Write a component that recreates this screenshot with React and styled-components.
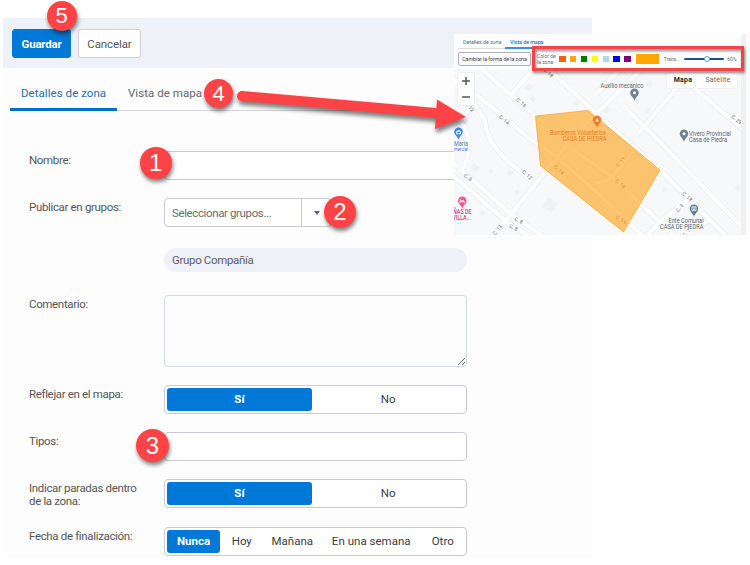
import React from "react";
import styled, { createGlobalStyle } from "styled-components";

const Global = createGlobalStyle`
  * { box-sizing: border-box; }
  body { margin: 0; background: #fff; font-family: Roboto, "Liberation Sans", sans-serif; }
  button, textarea, input { font-family: inherit; }
`;

const Page = styled.main`
  position: relative;
  width: 750px;
  height: 565px;
  padding: 18px 0 0 3px;
  overflow: hidden;
`;

const Panel = styled.section`
  width: 589px;
  height: 541px;
  background: #fdfdfd;
`;

const Toolbar = styled.header`
  display: flex;
  gap: 7px;
  height: 50px;
  padding: 11px 9px;
  background: #eef1f7;
`;

const Button = styled.button`
  width: ${(p) => (p.$primary ? 59 : 63)}px;
  height: 29px;
  padding: 0;
  border: 1px solid ${(p) => (p.$primary ? "#0078d7" : "#cdced9")};
  border-radius: 3px;
  background: ${(p) => (p.$primary ? "#0078d7" : "#fff")};
  color: ${(p) => (p.$primary ? "#fff" : "#555")};
  font-size: 11.5px;
  font-weight: ${(p) => (p.$primary ? 700 : 400)};
  letter-spacing: ${(p) => (p.$primary ? -0.22 : -0.1)}px;
`;

const Tabs = styled.nav`
  display: flex;
  height: 43px;
  margin-left: 7px;
  border-bottom: 1px solid #d3d4dc;
`;

const Tab = styled.div`
  height: 43px;
  padding: 18px 11px 0;
  width: ${(p) => (p.$active ? 107 : 100)}px;
  border-bottom: 3px solid ${(p) => (p.$active ? "#0070c8" : "transparent")};
  color: ${(p) => (p.$active ? "#1a6fb5" : "#666")};
  font-size: 11.5px;
  line-height: 15px;
  letter-spacing: 0.05px;
  white-space: nowrap;
`;

const Form = styled.div`
  display: flex;
  flex-direction: column;
  gap: 18px;
  padding: 40px 0 0 26px;
`;

const Row = styled.div`
  display: grid;
  grid-template-columns: 135px 303px;
  margin-top: ${(p) => p.$shift || 0}px;
`;

const Label = styled.label`
  padding-top: 3px;
  width: 118px;
  color: #555;
  font-size: 11.5px;
  line-height: 13px;
  letter-spacing: -0.34px;
`;

const Field = styled.div`
  height: 29px;
  border: 1px solid #c8cad8;
  border-radius: 4px;
  background: #fff;
`;

const Combo = styled(Field)`
  display: grid;
  grid-template-columns: 137px 29px;
  width: 168px;
  color: #6c6c6c;
  font-size: 11.5px;
  line-height: 28px;
  letter-spacing: -0.38px;
`;

const ComboText = styled.span`
  padding-left: 7px;
  border-right: 1px solid #c8cad8;
`;

const ComboArrow = styled.span`
  display: grid;
  place-items: center;
`;

const Chip = styled.div`
  grid-column: 2;
  height: 24px;
  padding-left: 8px;
  border-radius: 12px;
  background: #eef1f7;
  color: #606060;
  font-size: 11.5px;
  line-height: 24px;
  letter-spacing: -0.35px;
`;

const Comment = styled.textarea`
  display: block;
  width: 303px;
  height: 72px;
  border: 1px solid #c9def0;
  border-radius: 4px;
  background: #fdfdfd;
  outline: none;
`;

const Segments = styled(Field)`
  display: grid;
  grid-template-columns: ${(p) => p.$cols};
  padding: 2px;
`;

const Segment = styled.div`
  border-radius: 3px;
  background: ${(p) => (p.$on ? "#0078d7" : "transparent")};
  color: ${(p) => (p.$on ? "#fff" : "#3c3c3c")};
  font-size: 11.5px;
  font-weight: ${(p) => (p.$on ? 700 : 400)};
  line-height: 23px;
  letter-spacing: 0.02px;
  padding-left: ${(p) => (p.$on ? 0 : 0.5)}px;
  text-align: center;
  white-space: nowrap;
`;

const Badge = styled.div`
  position: absolute;
  left: ${(p) => p.$x}px;
  top: ${(p) => p.$y}px;
  width: ${(p) => p.$d}px;
  height: ${(p) => p.$d}px;
  border-radius: 50%;
  background: #fd4345;
  box-shadow: 1px 3px 4px rgba(0, 0, 0, 0.5);
  color: #fff;
  font-family: "Liberation Sans", sans-serif;
  font-size: ${(p) => (p.$d > 30 ? 24 : 22)}px;
  line-height: ${(p) => p.$d}px;
  text-align: center;
`;

const Arrow = styled.svg`
  position: absolute;
  left: 230px;
  top: 85px;
  filter: drop-shadow(1px 4px 2px rgba(0, 0, 0, 0.5));
`;

const Preview = styled.section`
  position: absolute;
  left: 454px;
  top: 34px;
  width: 292px;
  height: 201px;
  border-right: 5px solid #f0f0f0;
  background: #fff;
`;

const MiniTabs = styled.nav`
  display: flex;
  height: 15px;
  margin-left: 4px;
  border-bottom: 1px solid #dcdcdc;
`;

const MiniTab = styled.div`
  width: ${(p) => (p.$active ? 43 : 47)}px;
  height: 15px;
  padding: 4px 0 0 5px;
  border-bottom: 2px solid ${(p) => (p.$active ? "#3a90dc" : "transparent")};
  color: ${(p) => (p.$active ? "#1777c9" : "#666")};
  font-size: 5.4px;
  font-weight: ${(p) => (p.$active ? 500 : 400)};
  line-height: 8px;
  letter-spacing: -0.08px;
  white-space: nowrap;
`;

const MiniBar = styled.div`
  display: flex;
  align-items: center;
  height: 20px;
  padding-left: 4px;
  color: #666;
  font-size: 5px;
  white-space: nowrap;
`;

const ShapeButton = styled.div`
  width: 73px;
  height: 14px;
  margin-right: 6px;
  border: 1px solid #aab2c2;
  border-radius: 2px;
  background: #fafafc;
  color: #444;
  font-size: 5.3px;
  line-height: 13px;
  letter-spacing: -0.06px;
  text-align: center;
`;

const ColorLabel = styled.div`
  width: 22px;
  font-size: 5px;
  line-height: 6px;
`;

const Swatches = styled.div`
  display: flex;
  gap: 4.4px;
  margin-right: 5px;
`;

const Swatch = styled.span`
  width: 6.5px;
  height: 6.5px;
  background: ${(p) => p.$c};
`;

const Selected = styled.span`
  width: 23px;
  height: 10px;
  margin-right: 5px;
  background: #ffa500;
`;

const Track = styled.span`
  display: grid;
  place-content: center;
  width: 40px;
  height: 2px;
  margin: 0 3px 0 4px;
  padding-left: 6px;
  border-radius: 1px;
  background: #1d4f94;
`;

const Knob = styled.span`
  width: 6px;
  height: 6px;
  border: 1px solid #5aa0d8;
  border-radius: 50%;
  background: #fff;
`;

const MapArea = styled.div`
  position: relative;
  height: 166px;
`;

const Zoom = styled.div`
  position: absolute;
  left: 4px;
  top: 4px;
  display: grid;
  grid-template-rows: 16px 16px;
  place-items: center;
  width: 16px;
  background: #fff;
  box-shadow: 0 0 1px #bbb;
`;

const MapTypes = styled.div`
  position: absolute;
  left: 213px;
  top: 4px;
  display: grid;
  grid-template-columns: 32px 38px;
  height: 15px;
  background: #fff;
  box-shadow: 0 0 1px #ccc;
  font-size: 7px;
  line-height: 15px;
  text-align: center;
  letter-spacing: 0.2px;
`;

const MapType = styled.span`
  color: ${(p) => (p.$on ? "#111" : "#666")};
  font-weight: ${(p) => (p.$on ? 600 : 400)};
`;

const Highlight = styled.div`
  position: absolute;
  left: 532px;
  top: 46px;
  width: 212px;
  height: 25px;
  border: 3px solid #f54447;
  filter: drop-shadow(1px 2px 1.5px rgba(0, 0, 0, 0.5));
`;

const roads = [
  "M476 64L513 97L545 124",
  "M510 96L536 66",
  "M450 76L475 94L507 119Q530 141 550 152L600 195L645 238",
  "M450 81Q473 96 485 121C487 148 509 162 533 182",
  "M454 116C470 125 474 154 460 172",
  "M543 64L600 117L660 170L729 239",
  "M450 160L510 213L548 240",
  "M450 173L507 222L535 240",
  "M490 240L533 187L575 135L647 64",
  "M595 95L623 66",
  "M622 105L655 137L745 230",
  "M637 135L684 79",
  "M668 66L745 131",
  "M565 144L612 177L660 222L676 238",
  "M595 183Q607 182 612 177L633 150",
  "M643 240L660 222L687 200",
  "M676 240L710 220",
];

const streets = [
  [520, 104, 42, "C. 16"], [503, 121, 42, "C. 14"], [468, 108, 50, "C. 12"],
  [526, 176, 42, "C. 12"], [467, 179, 35, "C. 8"], [518, 222, 25, "C. 8"],
  [513, 229, 25, "C. 8"], [499, 231, -50, "C. 13"], [558, 171, 42, "C. 14"],
  [622, 163, -52, "C. 11"], [619, 185, 42, "C. 10"], [620, 221, 32, "C. 14"],
  [686, 198, 42, "C. 18"], [681, 209, -52, "C. 9"], [735.5, 121, 40, "C. 29"],
  [547, 74, 42, "C. 18"], [688, 234, -50, "C. 7"],
];

const blocks = [
  [475, 168, 7], [491, 171, 4], [510, 173, 5], [550, 205, 11], [482, 213, 5],
  [517, 192, 4], [529, 87, 6], [576, 103, 5], [607, 110, 6], [637, 100, 5],
  [647, 111, 5], [664, 190, 4], [738, 188, 5], [650, 84, 6], [533, 99, 5],
];

function Pin({ x, y, color, glyph = "dot" }) {
  return (
    <g transform={`translate(${x} ${y})`}>
      <path d="M0 7C-1 3 -4.3 2 -4.3-1.2A4.3 4.3 0 1 1 4.3-1.2C4.3 2 1 3 0 7Z" fill={color} />
      {glyph === "dot" && <circle cy="-1.2" r="1.5" fill="#fff" />}
      {glyph === "bed" && <path d="M-2.1-2.7V.7M-2.1-.3H2.1V.7M-.7-1.5H1.3" fill="none" stroke="#fff" strokeWidth=".9" />}
      {glyph === "bag" && <path d="M-2-1.6H2V.8H-2ZM-1-1.8Q0-4 1-1.8" fill="none" stroke="#fff" strokeWidth=".9" />}
      {glyph === "hall" && <path d="M-2-3.2H2V.7H-2ZM-1-2H1M-1-.6H1" fill="none" stroke="#fff" strokeWidth=".8" />}
      {glyph === "flame" && <path d="M0-3.6C.2-2 2-1.6 1.6.1C1.2 1.3-1.2 1.3-1.6.1C-1.8-1-.4-1.6 0-3.6Z" fill="#ffd39a" />}
    </g>
  );
}

function MapDrawing() {
  return (
    <svg width="287" height="166" viewBox="454 69 287 166" display="block" fontFamily="Roboto">
      <rect x="454" y="69" width="287" height="166" fill="#f7f8f9" />
      {blocks.map(([x, y, s]) => (
        <rect key={`${x}-${y}`} x={x - s / 2} y={y - s / 2} width={s} height={s} fill="#f0f1f3" transform={`rotate(32 ${x} ${y})`} />
      ))}
      <g fill="none" stroke="#e6e8eb" strokeWidth="5.4">{roads.map((d) => <path key={d} d={d} />)}</g>
      <g fill="none" stroke="#fff" strokeWidth="4.2">{roads.map((d) => <path key={d} d={d} />)}</g>
      <g fill="#5f6468" fontSize="5" textAnchor="middle">
        {streets.map(([x, y, r, t]) => (
          <text key={`${x}-${y}`} transform={`translate(${x} ${y}) rotate(${r})`}>{t}</text>
        ))}
      </g>
      <path d="M535.5 116L588 110.5L660 170L623.5 232L540.5 165.7Z" fill="#ffa51f" fillOpacity=".64" stroke="#f9a72c" strokeWidth=".8" />
      <Pin x={597} y={121} color="#f07d26" glyph="flame" />
      <Pin x={634.5} y={94} color="#708392" />
      <Pin x={684} y={135} color="#708392" />
      <Pin x={694} y={210} color="#5c7c91" glyph="hall" />
      <Pin x={458.5} y={133} color="#4285f4" glyph="bag" />
      <Pin x={462.3} y={202} color="#ee5b94" glyph="bed" />
      <g fontSize="6.4">
        <text x="550" y="134.5" fill="#e87a24" textLength="56" lengthAdjust="spacingAndGlyphs">Bomberos Voluntarios</text>
        <text x="562.5" y="140.7" fill="#e87a24" textLength="44" lengthAdjust="spacingAndGlyphs">CASA DE PIEDRA</text>
        <g fill="#526573">
          <text x="600.5" y="88" textLength="43" lengthAdjust="spacingAndGlyphs">Auxilio mecanico</text>
          <text x="689" y="135.7" textLength="42" lengthAdjust="spacingAndGlyphs">Vivero Provincial</text>
          <text x="689" y="141.7" textLength="38" lengthAdjust="spacingAndGlyphs">Casa de Piedra</text>
          <text x="668.5" y="222.7" textLength="35" lengthAdjust="spacingAndGlyphs">Ente Comunal</text>
          <text x="660" y="228.5" textLength="43.5" lengthAdjust="spacingAndGlyphs">CASA DE PIEDRA</text>
        </g>
        <text x="454" y="146.3" fill="#3d7fe0" textLength="14" lengthAdjust="spacingAndGlyphs">Maria</text>
        <text x="454" y="151" fill="#3d7fe0" fontSize="5" textLength="14" lengthAdjust="spacingAndGlyphs">mercial</text>
        <g fill="#d9367a" fontWeight="500">
          <text x="453" y="214" textLength="18.5" lengthAdjust="spacingAndGlyphs">ÑAS DE</text>
          <text x="452.5" y="220" textLength="18.5" lengthAdjust="spacingAndGlyphs">VILLA...</text>
        </g>
      </g>
    </svg>
  );
}

const swatches = ["#ff5f0a", "#ffa31a", "#008000", "#ffff00", "#add8e6", "#0000ff", "#800080"];
const badges = [[5, 46.5, 0.5, 30], [4, 204, 78.5, 29], [1, 140, 147, 31.5], [2, 324, 196, 32], [3, 136, 429, 33]];

function YesNo() {
  return (
    <Segments $cols="145px 1fr">
      <Segment $on>Sí</Segment>
      <Segment>No</Segment>
    </Segments>
  );
}

export default function App() {
  return (
    <Page>
      <Global />
      <Panel>
        <Toolbar>
          <Button $primary>Guardar</Button>
          <Button>Cancelar</Button>
        </Toolbar>
        <Tabs>
          <Tab $active>Detalles de zona</Tab>
          <Tab>Vista de mapa</Tab>
        </Tabs>
        <Form>
          <Row><Label>Nombre:</Label><Field /></Row>
          <Row>
            <Label>Publicar en grupos:</Label>
            <Combo>
              <ComboText>Seleccionar grupos...</ComboText>
              <ComboArrow><svg width="6" height="4"><path d="M0 0H6L3 4Z" fill="#52677d" /></svg></ComboArrow>
            </Combo>
          </Row>
          <Row $shift={3}><Chip>Grupo Compañía</Chip></Row>
          <Row $shift={5}><Label>Comentario:</Label><Comment /></Row>
          <Row><Label>Reflejar en el mapa:</Label><YesNo /></Row>
          <Row><Label>Tipos:</Label><Field /></Row>
          <Row><Label>Indicar paradas dentro de la zona:</Label><YesNo /></Row>
          <Row $shift={0.5}>
            <Label>Fecha de finalización:</Label>
            <Segments $cols="53px 43px 58px 100px 43px">
              <Segment $on>Nunca</Segment>
              <Segment>Hoy</Segment>
              <Segment>Mañana</Segment>
              <Segment>En una semana</Segment>
              <Segment>Otro</Segment>
            </Segments>
          </Row>
        </Form>
      </Panel>

      <Preview>
        <MiniTabs>
          <MiniTab>Detalles de zona</MiniTab>
          <MiniTab $active>Vista de mapa</MiniTab>
        </MiniTabs>
        <MiniBar>
          <ShapeButton>Cambiar la forma de la zona</ShapeButton>
          <ColorLabel>Color de<br />la zona:</ColorLabel>
          <Swatches>{swatches.map((c) => <Swatch key={c} $c={c} />)}</Swatches>
          <Selected />
          Trans...
          <Track><Knob /></Track>
          60%
        </MiniBar>
        <MapArea>
          <MapDrawing />
          <Zoom>
            <svg width="8" height="8"><path d="M0 4H8M4 0V8" stroke="#555" strokeWidth="1.5" /></svg>
            <svg width="8" height="8"><path d="M0 4H8" stroke="#555" strokeWidth="1.5" /></svg>
          </Zoom>
          <MapTypes><MapType $on>Mapa</MapType><MapType>Satélite</MapType></MapTypes>
        </MapArea>
      </Preview>

      <Highlight />
      <Arrow width="250" height="80">
        <path d="M12 11L206 28" stroke="#fd4345" strokeWidth="10" strokeLinecap="round" />
        <path d="M207 14.5L236 32L205 44Z" fill="#fd4345" />
      </Arrow>
      {badges.map(([n, x, y, d]) => <Badge key={n} $x={x} $y={y} $d={d}>{n}</Badge>)}
    </Page>
  );
}
